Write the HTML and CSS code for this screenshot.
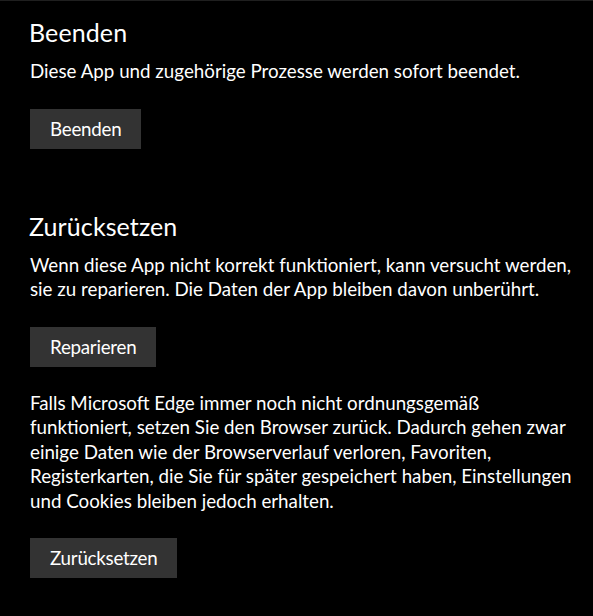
FILE: index.html
```html
<!DOCTYPE html>
<html lang="de">
<head>
<meta charset="utf-8">
<title>Beenden / Zurücksetzen</title>
<link rel="stylesheet" href="styles.css">
</head>
<body>
<main class="page">
  <section class="group">
    <h2 class="title">Beenden</h2>
    <p class="text">Diese App und zugehörige Prozesse werden sofort beendet.</p>
    <button class="btn">Beenden</button>
  </section>
  <section class="group group-reset">
    <h2 class="title">Zurücksetzen</h2>
    <p class="text">Wenn diese App nicht korrekt funktioniert, kann versucht werden, sie zu reparieren. Die Daten der App bleiben davon unberührt.</p>
    <button class="btn">Reparieren</button>
    <p class="text text-after">Falls Microsoft Edge immer noch nicht ordnungsgemäß funktioniert, setzen Sie den Browser zurück. Dadurch gehen zwar einige Daten wie der Browserverlauf verloren, Favoriten, Registerkarten, die Sie für später gespeichert haben, Einstellungen und Cookies bleiben jedoch erhalten.</p>
    <button class="btn">Zurücksetzen</button>
  </section>
</main>
</body>
</html>
```
FILE: styles.css
```css
html, body {
  margin: 0;
  padding: 0;
  background: #000;
}
body {
  height: 616px;
  border-top: 1px solid #1f1f1f;
  box-sizing: border-box;
  color: #fff;
  font-family: Lato, "Open Sans", sans-serif;
}
.page {
  padding: 15px 0 0 30px;
  display: flex;
  flex-direction: column;
}
.group {
  display: flex;
  flex-direction: column;
  align-items: flex-start;
}
.group-reset {
  margin-top: 61px;
}
.title {
  margin: 0 0 0 -1px;
  font-size: 25px;
  line-height: 33px;
  font-weight: 400;
  letter-spacing: 0.1px;
}
.text {
  margin: 10px 0 0 0;
  width: 545px;
  font-size: 18.75px;
  line-height: 24.5px;
  font-weight: 400;
}
.text-after {
  margin-top: 24px;
}
.btn {
  margin-top: 25px;
  height: 40px;
  padding: 0 20px;
  border: 0;
  background: #333333;
  color: #fff;
  font-family: Lato, "Open Sans", sans-serif;
  font-size: 18.75px;
  line-height: 40px;
  letter-spacing: -0.25px;
}
```
